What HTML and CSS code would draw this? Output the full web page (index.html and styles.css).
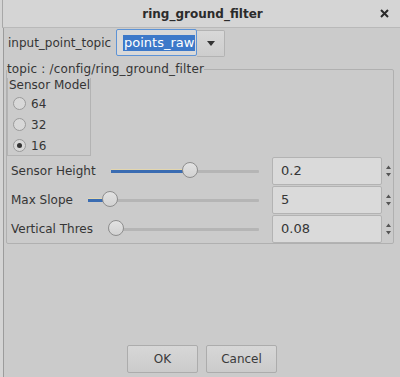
FILE: index.html
```html
<!DOCTYPE html>
<html lang="en">
<head>
    <meta charset="UTF-8" />
    <title>ring_ground_filter</title>
    <link rel="stylesheet" href="styles.css">
</head>
<body>

<div class="window">
    <!-- title bar -->
    <div class="titlebar">
        <span class="title">ring_ground_filter</span>
        <span class="close">
            <svg width="9" height="9" viewBox="0 0 9 9"><path d="M1 1L8 8M8 1L1 8" stroke="#2a2a2a" stroke-width="2"/></svg>
        </span>
    </div>

    <div class="content">
        <!-- topic selector -->
        <div class="topic-row">
            <span class="topic-label">input_point_topic</span>
            <div class="combo">
                <div class="combo-edit"><span class="selected">points_raw</span></div>
                <div class="combo-btn">
                    <svg width="8" height="5" viewBox="0 0 8 5"><path d="M0 0H8L4 5Z" fill="#333"/></svg>
                </div>
            </div>
        </div>

        <!-- parameters -->
        <fieldset class="group">
            <legend>topic : /config/ring_ground_filter</legend>

            <div class="sensor-model">
                <div class="sensor-title">Sensor Model</div>
                <label class="radio"><span class="dot"></span>64</label>
                <label class="radio"><span class="dot"></span>32</label>
                <label class="radio"><span class="dot checked"></span>16</label>
            </div>

            <div class="param-row">
                <span class="param-label">Sensor Height</span>
                <div class="slider" style="--v:54%">
                    <div class="track"><div class="fill"></div><div class="handle"></div></div>
                </div>
                <div class="spin">
                    <div class="spin-box">0.2</div>
                    <div class="spin-arrows">
                        <svg width="7" height="14" viewBox="0 0 7 14"><path d="M1 5L3.5 1.5L6 5Z M1 9L3.5 12.5L6 9Z" fill="#555"/></svg>
                    </div>
                </div>
            </div>

            <div class="param-row">
                <span class="param-label">Max Slope</span>
                <div class="slider" style="--v:9%">
                    <div class="track"><div class="fill"></div><div class="handle"></div></div>
                </div>
                <div class="spin">
                    <div class="spin-box">5</div>
                    <div class="spin-arrows">
                        <svg width="7" height="14" viewBox="0 0 7 14"><path d="M1 5L3.5 1.5L6 5Z M1 9L3.5 12.5L6 9Z" fill="#555"/></svg>
                    </div>
                </div>
            </div>

            <div class="param-row">
                <span class="param-label">Vertical Thres</span>
                <div class="slider" style="--v:0%">
                    <div class="track"><div class="handle"></div></div>
                </div>
                <div class="spin">
                    <div class="spin-box">0.08</div>
                    <div class="spin-arrows">
                        <svg width="7" height="14" viewBox="0 0 7 14"><path d="M1 5L3.5 1.5L6 5Z M1 9L3.5 12.5L6 9Z" fill="#555"/></svg>
                    </div>
                </div>
            </div>
        </fieldset>

        <!-- dialog buttons -->
        <div class="buttons">
            <button class="btn">OK</button>
            <button class="btn">Cancel</button>
        </div>
    </div>
</div>

</body>
</html>
```

FILE: styles.css
```css
body {
    margin: 0;
    font-family: 'DejaVu Sans', 'Liberation Sans', sans-serif;
    font-size: 12px;
    color: #353535;
    background: #cbcbcb;
}

.window {
    height: 377px;
    display: flex;
    flex-direction: column;
    border-left: 3px solid #d4d4d4;
    box-sizing: border-box;
}

.titlebar {
    height: 27px;
    flex-shrink: 0;
    display: flex;
    align-items: center;
    justify-content: center;
    position: relative;
    background: #d5d5d5;
    border-bottom: 1px solid #b9b9b9;
    border-left: 1px solid #a8a8a8;
    margin-left: -1px;
}

.title {
    font-weight: bold;
    color: #2b2b2b;
    margin-left: 2px;
}

.close {
    position: absolute;
    right: 11px;
    top: 9px;
    line-height: 0;
}

.content {
    flex: 1;
    display: flex;
    flex-direction: column;
    border-left: 1px solid #9c9c9c;
    padding: 0 6px 4px 2px;
}

.topic-row {
    display: flex;
    align-items: center;
    height: 28px;
    margin-top: 1px;
    padding-left: 2px;
}

.topic-label {
    width: 108px;
}

.combo {
    display: flex;
    height: 28px;
}

.combo-edit {
    width: 81px;
    box-sizing: border-box;
    border: 1px solid #5d93d6;
    border-radius: 2px;
    background: #d9d9d9;
    display: flex;
    align-items: center;
    padding-left: 6px;
    height: 27px;
}

.selected {
    background: #3d79c9;
    color: #fff;
    padding: 1px 1px;
    line-height: 14px;
    font-size: 13px;
}

.combo-btn {
    width: 28px;
    height: 27px;
    margin-top: 1px;
    box-sizing: border-box;
    border: 1px solid #b3b3b3;
    border-left: none;
    border-radius: 0 2px 2px 0;
    background: linear-gradient(#d8d8d8, #cdcdcd);
    display: flex;
    align-items: center;
    justify-content: center;
}

.group {
    margin: 5px 0 0 0;
    padding: 0;
    border: 1px solid #b0b0b0;
    border-radius: 2px;
    min-width: 0;
}

.group legend {
    padding: 0;
    margin-left: 0;
    line-height: 14px;
    letter-spacing: 0.15px;
}

.sensor-model {
    width: 84px;
    height: 78px;
    box-sizing: border-box;
    margin-top: 1px;
    border: 1px solid #b3b3b3;
    border-top: none;
    padding-left: 1px;
}

.sensor-title {
    line-height: 14px;
    margin-top: 2px;
    white-space: nowrap;
}

.radio {
    display: flex;
    align-items: center;
    height: 21px;
    padding-left: 4px;
}

.radio:first-of-type {
    margin-top: 1px;
}

.dot {
    width: 11px;
    height: 11px;
    border: 1px solid #9a9a9a;
    border-radius: 50%;
    background: #d8d8d8;
    margin-right: 5px;
    position: relative;
}

.dot.checked::after {
    content: '';
    position: absolute;
    left: 3px;
    top: 3px;
    width: 5px;
    height: 5px;
    border-radius: 50%;
    background: #333;
}

.param-row {
    display: flex;
    align-items: center;
    height: 29px;
    padding-left: 4px;
}

.param-row:first-of-type {
    margin-top: 1px;
}

.param-label {
    margin-right: 15px;
    white-space: nowrap;
}

.slider {
    flex: 1;
    height: 18px;
    position: relative;
    margin-right: 13px;
}

.slider::before {
    content: '';
    position: absolute;
    left: 0;
    right: 0;
    top: 8px;
    height: 3px;
    background: #b5b5b5;
    border-radius: 1px;
}

.track {
    position: absolute;
    left: 8px;
    right: 8px;
    top: 0;
    bottom: 0;
}

.fill {
    position: absolute;
    left: -8px;
    top: 8px;
    height: 3px;
    width: calc(var(--v) + 8px);
    background: #3a6cb2;
    box-shadow: 0 -1px 0 #e3d6ae;
}

.handle {
    position: absolute;
    top: 0;
    left: var(--v);
    margin-left: -8px;
    width: 16px;
    height: 16px;
    box-sizing: border-box;
    border: 1px solid #8e8e8e;
    border-radius: 50%;
    background: linear-gradient(#e2e2e2, #d2d2d2);
}

.spin {
    display: flex;
    height: 29px;
    align-items: center;
}

.spin-box {
    width: 110px;
    height: 28px;
    box-sizing: border-box;
    border: 1px solid #b3b3b3;
    border-radius: 2px;
    background: #dadada;
    display: flex;
    align-items: center;
    padding-left: 8px;
    font-size: 13px;
}

.spin-arrows {
    width: 10px;
    display: flex;
    justify-content: center;
    padding-left: 1px;
}

.buttons {
    margin-top: auto;
    display: flex;
    justify-content: center;
    gap: 8px;
    padding-left: 4px;
}

.btn {
    width: 71px;
    height: 28px;
    font-family: inherit;
    font-size: 12px;
    color: #3a3a3a;
    border: 1px solid #acacac;
    border-radius: 2px;
    background: linear-gradient(#d7d7d7, #cbcbcb);
}
```
